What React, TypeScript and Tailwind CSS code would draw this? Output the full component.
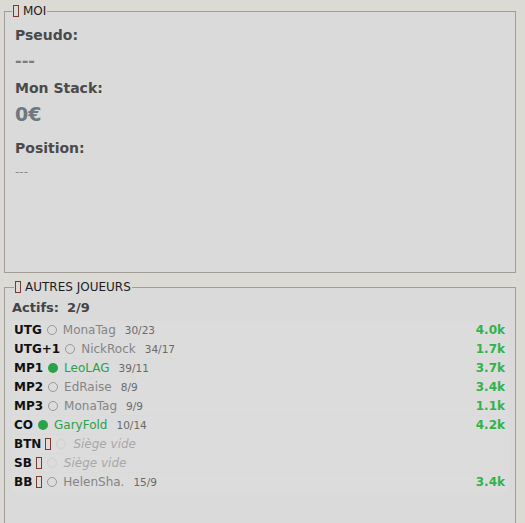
import React from "react";

type Row = {
  pos: string;
  tofu?: boolean;
  active?: boolean;
  empty?: boolean;
  name?: string;
  stats?: string;
  stack?: string;
};

const rows: Row[] = [
  { pos: "UTG", name: "MonaTag", stats: "30/23", stack: "4.0k" },
  { pos: "UTG+1", name: "NickRock", stats: "34/17", stack: "1.7k" },
  { pos: "MP1", active: true, name: "LeoLAG", stats: "39/11", stack: "3.7k" },
  { pos: "MP2", name: "EdRaise", stats: "8/9", stack: "3.4k" },
  { pos: "MP3", name: "MonaTag", stats: "9/9", stack: "1.1k" },
  { pos: "CO", active: true, name: "GaryFold", stats: "10/14", stack: "4.2k" },
  { pos: "BTN", tofu: true, empty: true },
  { pos: "SB", tofu: true, empty: true },
  { pos: "BB", tofu: true, name: "HelenSha.", stats: "15/9", stack: "3.4k" },
];

function Tofu({ className = "" }: { className?: string }) {
  return (
    <span
      className={
        "inline-block border border-[#7a3a2c] w-[6px] h-[12px] " + className
      }
    />
  );
}

export default function App() {
  return (
    <div
      className="w-[525px] h-[523px] overflow-hidden bg-[#dcdad5] pl-[4px] pr-[9px] pt-[4px]"
      style={{ fontFamily: '"DejaVu Sans", sans-serif' }}
    >
      <fieldset className="h-[269px] border border-[#a29e97] bg-[#dadada] px-[10px]">
        <legend className="-ml-[3px] flex items-center gap-[4px] pl-[1px] pr-[1px] text-[12px] leading-[14px] text-[#1c1c1c]">
          <Tofu />
          <span>MOI</span>
        </legend>
        <div className="pt-[9px]">
          <div className="text-[14px] leading-[17px] font-bold text-[#4a4a4a]">
            Pseudo:
          </div>
          <div className="mt-[8px] text-[16px] leading-[18px] font-bold text-[#7c7c7c]">
            ---
          </div>
          <div className="mt-[10px] text-[14px] leading-[17px] font-bold text-[#4a4a4a]">
            Mon Stack:
          </div>
          <div className="mt-[6px] text-[19px] leading-[22px] font-bold text-[#6f7780]">
            0€
          </div>
          <div className="mt-[15px] text-[14px] leading-[17px] font-bold text-[#4a4a4a]">
            Position:
          </div>
          <div className="mt-[8px] text-[12px] leading-[14px] text-[#8a8a8a]">
            ---
          </div>
        </div>
      </fieldset>

      <fieldset className="mt-[7px] h-[260px] border border-[#a29e97] bg-[#dadada] pl-[7px] pr-[6px]">
        <legend className="ml-[2px] flex items-center gap-[4px] pl-[1px] pr-[1px] text-[12px] leading-[14px] text-[#1c1c1c]">
          <Tofu />
          <span>AUTRES JOUEURS</span>
        </legend>
        <div className="pt-[6px] flex items-center gap-[8px] text-[13px] leading-[16px] font-bold text-[#444444]">
          <span>Actifs:</span>
          <span>2/9</span>
        </div>
        <div className="mt-[5px] flex flex-col gap-[1px]">
          {rows.map((r, i) => (
            <div
              key={i}
              className="h-[18px] flex items-center bg-[#dcdcdc] pl-[2px] pr-[4px]"
            >
              <span className="text-[12px] font-bold text-[#111111]">
                {r.pos}
              </span>
              {r.tofu && <Tofu className="ml-[4px] h-[11px] w-[5px]" />}
              <span
                className={
                  "ml-[5px] inline-block w-[10px] h-[10px] rounded-full " +
                  (r.active
                    ? "bg-[#2aa24a]"
                    : r.empty
                    ? "border border-[#d0d0d0]"
                    : "border border-[#9a9a9a]")
                }
              />
              {r.empty ? (
                <span className="ml-[7px] text-[12px] italic text-[#a8a8a8]">
                  Siège vide
                </span>
              ) : (
                <span className="ml-[6px] flex items-baseline">
                  <span
                    className={
                      "text-[12px] " +
                      (r.active ? "text-[#2aa24a]" : "text-[#858585]")
                    }
                  >
                    {r.name}
                  </span>
                  <span className="ml-[9px] text-[10.5px] text-[#6a6a6a]">
                    {r.stats}
                  </span>
                </span>
              )}
              <span className="ml-auto text-[12px] font-bold text-[#2fb34a]">
                {r.stack ?? ""}
              </span>
            </div>
          ))}
        </div>
      </fieldset>
    </div>
  );
}
